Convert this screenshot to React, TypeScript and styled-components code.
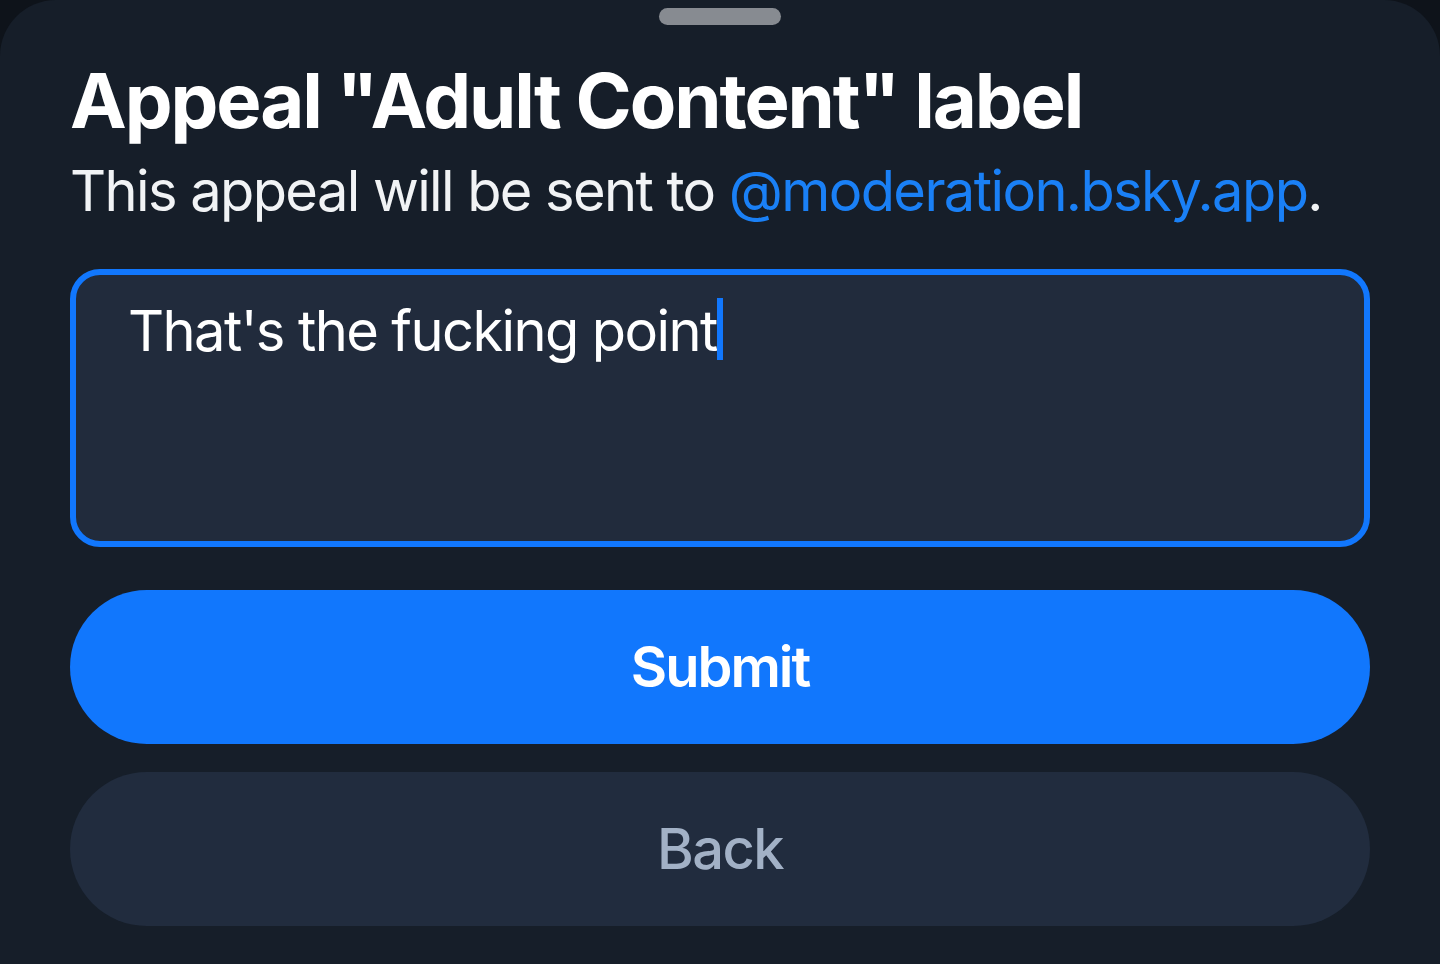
import React from "react";
import styled, { createGlobalStyle } from "styled-components";

const Global = createGlobalStyle`
  html, body { margin: 0; padding: 0; background: #0e131a; }
  body { font-family: Inter, "Noto Sans", sans-serif; -webkit-font-smoothing: antialiased; }
  #root { width: 1440px; height: 964px; overflow: hidden; }
`;

const Sheet = styled.div`
  width: 1440px;
  height: 964px;
  box-sizing: border-box;
  background: #161e29;
  border-radius: 56px 56px 0 0;
  display: flex;
  flex-direction: column;
  padding: 8px 70px 0;
`;

const HandleRow = styled.div`
  display: flex;
  justify-content: center;
  flex-shrink: 0;
`;

const Handle = styled.div`
  width: 122px;
  height: 17px;
  border-radius: 9px;
  background: #878b91;
`;

const Title = styled.h1`
  margin: 29px 0 0;
  font-size: 76px;
  line-height: 92px;
  font-weight: 700;
  color: #ffffff;
  letter-spacing: -2.1px;
  white-space: nowrap;
`;

const Subtitle = styled.p`
  margin: 7px 0 0;
  font-size: 56px;
  line-height: 76px;
  font-weight: 400;
  color: #f1f3f5;
  letter-spacing: -1.6px;
  white-space: nowrap;
`;

const Handle2 = styled.span`
  color: #1a80f6;
`;

const InputBox = styled.div`
  margin-top: 40px;
  height: 278px;
  flex-shrink: 0;
  box-sizing: border-box;
  border: 6px solid #1177fd;
  border-radius: 30px;
  background: #212b3c;
  padding: 21px 52px;
`;

const InputText = styled.span`
  font-size: 56px;
  line-height: 70px;
  color: #ffffff;
  letter-spacing: -1.6px;
`;

const Caret = styled.span`
  display: inline-block;
  width: 6px;
  height: 62px;
  background: #1177fd;
  vertical-align: -9px;
`;

const Button = styled.button<{ $primary?: boolean }>`
  display: flex;
  align-items: center;
  justify-content: center;
  flex-shrink: 0;
  width: 100%;
  height: 154px;
  border: none;
  border-radius: 77px;
  font-family: Inter, "Noto Sans", sans-serif;
  font-size: 56px;
  letter-spacing: ${(p) => (p.$primary ? "-2px" : "-1.6px")};
  font-weight: ${(p) => (p.$primary ? 600 : 500)};
  background: ${(p) => (p.$primary ? "#1177fd" : "#212c3e")};
  color: ${(p) => (p.$primary ? "#ffffff" : "#a2b1c6")};
  margin-top: ${(p) => (p.$primary ? "43px" : "28px")};
  padding: 0;
`;

export default function App() {
  return (
    <>
      <Global />
      <Sheet>
        <HandleRow>
          <Handle />
        </HandleRow>
        <Title>Appeal "Adult Content" label</Title>
        <Subtitle>
          This appeal will be sent to <Handle2>@moderation.bsky.app</Handle2>.
        </Subtitle>
        <InputBox>
          <InputText>
            That's the fucking point
            <Caret />
          </InputText>
        </InputBox>
        <Button $primary>Submit</Button>
        <Button>Back</Button>
      </Sheet>
    </>
  );
}
